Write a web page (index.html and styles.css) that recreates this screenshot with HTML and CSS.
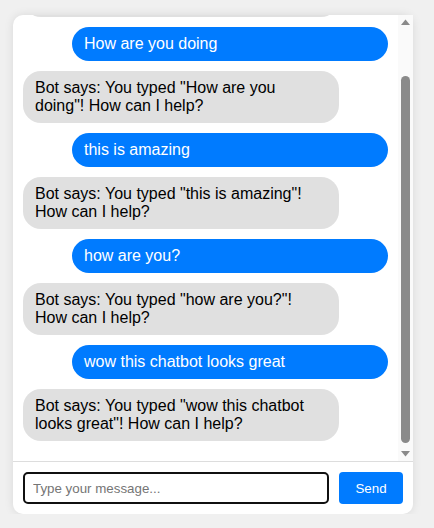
FILE: index.html
```html
<!DOCTYPE html>
<html lang="en">
<head>
<meta charset="utf-8">
<title>Chatbot</title>
<link rel="stylesheet" href="styles.css">
</head>
<body>
<div class="chat-container">
  <div class="chat-area">
    <div class="chat-box" id="chatBox">
      <div class="message bot">Hello! I am a simple chatbot. Type something below and I will reply.</div>
      <div class="message user">How are you doing</div>
      <div class="message bot">Bot says: You typed "How are you doing"! How can I help?</div>
      <div class="message user">this is amazing</div>
      <div class="message bot">Bot says: You typed "this is amazing"! How can I help?</div>
      <div class="message user">how are you?</div>
      <div class="message bot">Bot says: You typed "how are you?"! How can I help?</div>
      <div class="message user">wow this chatbot looks great</div>
      <div class="message bot">Bot says: You typed "wow this chatbot looks great"! How can I help?</div>
    </div>
    <div class="scrollbar" aria-hidden="true">
      <div class="sb-button">
        <svg width="15" height="15" viewBox="0 0 15 15"><path d="M3 10 L7.5 4.5 L12 10 Z" fill="#8a8a8a"/></svg>
      </div>
      <div class="sb-track">
        <div class="sb-thumb"></div>
      </div>
      <div class="sb-button">
        <svg width="15" height="15" viewBox="0 0 15 15"><path d="M3 5 L7.5 10.5 L12 5 Z" fill="#8a8a8a"/></svg>
      </div>
    </div>
  </div>
  <div class="input-area">
    <input class="chat-input" type="text" placeholder="Type your message..." autofocus>
    <button class="send-btn" type="button">Send</button>
  </div>
</div>
<script src="script.js"></script>
</body>
</html>
```
FILE: styles.css
```css
html, body {
  margin: 0;
  padding: 0;
}
body {
  background: #f0f0f0;
  font-family: "Liberation Sans", Arial, sans-serif;
}
.chat-container {
  width: 400px;
  height: 499px;
  margin: 15px 0 0 13px;
  background: #fff;
  border-radius: 10px;
  box-shadow: 0 0 10px rgba(0, 0, 0, 0.1);
  display: flex;
  flex-direction: column;
}
.chat-area {
  flex: 1;
  min-height: 0;
  display: flex;
}
.chat-box {
  flex: 1;
  min-width: 0;
  overflow-y: scroll;
  scrollbar-width: none;
  padding: 10px;
  display: flex;
  flex-direction: column;
}
.chat-box::-webkit-scrollbar {
  display: none;
}
.scrollbar {
  width: 15px;
  flex-shrink: 0;
  background: #fafafa;
  display: flex;
  flex-direction: column;
}
.sb-button {
  height: 15px;
  flex-shrink: 0;
}
.sb-button svg {
  display: block;
}
.sb-track {
  flex: 1;
  display: flex;
  flex-direction: column;
  justify-content: flex-end;
  padding: 0 3px 3px;
}
.sb-thumb {
  height: 367px;
  background: #8a8a8a;
  border-radius: 5px;
}
.message {
  width: 80%;
  flex-shrink: 0;
  padding: 8px 12px;
  margin-bottom: 10px;
  border-radius: 18px;
  font-size: 16px;
  line-height: normal;
}
.message.user {
  align-self: flex-end;
  background: #007bff;
  color: #fff;
}
.message.bot {
  align-self: flex-start;
  background: #e0e0e0;
  color: #000;
}
.input-area {
  display: flex;
  gap: 10px;
  padding: 10px;
  border-top: 1px solid #ddd;
}
.chat-input {
  flex: 1;
  box-sizing: border-box;
  height: 32px;
  padding: 0 8px;
  border: 2px solid #101010;
  border-radius: 5px;
  font-family: "Liberation Sans", Arial, sans-serif;
  font-size: 13.333px;
  color: #000;
  outline: none;
}
.chat-input::placeholder {
  color: #757575;
}
.send-btn {
  box-sizing: border-box;
  width: 64px;
  height: 32px;
  border: none;
  border-radius: 4px;
  background: #007bff;
  color: #fff;
  font-family: "Liberation Sans", Arial, sans-serif;
  font-size: 13.333px;
  padding: 0 16px;
}
```
FILE: script.js
```js
var box = document.getElementById('chatBox');
box.scrollTop = box.scrollHeight;
```
